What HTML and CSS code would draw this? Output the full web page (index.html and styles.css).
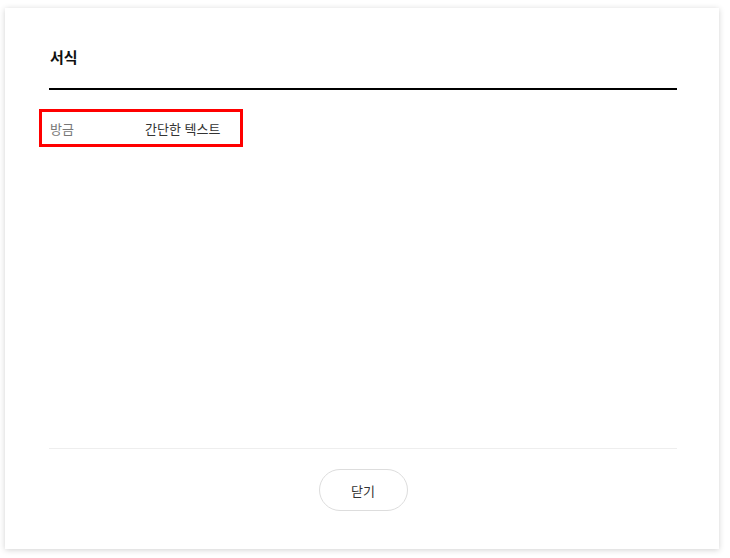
FILE: index.html
```html
<!DOCTYPE html>
<html lang="ko">
<head>
    <meta charset="UTF-8">
    <meta name="viewport" content="width=device-width, initial-scale=1.0">
    <title>서식</title>
    <link rel="stylesheet" href="styles.css">
</head>
<body>
    <div class="modal">
        <div class="modal-body">
            <h2 class="modal-title">서식</h2>
            <div class="format-list">
                <div class="format-row">
                    <span class="format-label">방금</span>
                    <span class="format-value">간단한 텍스트</span>
                </div>
            </div>
        </div>
        <div class="modal-footer">
            <button type="button" class="close-btn">닫기</button>
        </div>
    </div>
</body>
</html>
```

FILE: styles.css
```css
body {
    margin: 0;
    padding: 8px 11px 9px 5px;
    background-color: #fff;
    font-family: "Noto Sans CJK KR", "Noto Sans", sans-serif;
}

.modal {
    height: 541px;
    background-color: #fff;
    box-shadow: 0 1px 6px rgba(0, 0, 0, 0.18);
    padding: 0 42px 0 44px;
    display: flex;
    flex-direction: column;
}

.modal-body {
    flex: 1;
}

.modal-title {
    margin: 0;
    padding-top: 38px;
    padding-left: 1px;
    height: 42px;
    font-size: 15px;
    font-weight: bold;
    color: #111;
    line-height: 22px;
    border-bottom: 2px solid #000;
}

.format-list {
    padding-top: 19px;
    margin-left: -10px;
}

.format-row {
    box-sizing: border-box;
    display: inline-flex;
    align-items: center;
    width: 204px;
    height: 38px;
    border: 3px solid #f00;
    padding-left: 8px;
    font-size: 13px;
}

.format-label {
    width: 95px;
    color: #777;
}

.format-value {
    color: #333;
}

.modal-footer {
    border-top: 1px solid #eee;
    height: 101px;
    display: flex;
    justify-content: center;
    padding-top: 20px;
    box-sizing: border-box;
}

.close-btn {
    width: 89px;
    height: 42px;
    border: 1px solid #ddd;
    border-radius: 21px;
    background-color: #fff;
    font-family: inherit;
    font-size: 13px;
    color: #333;
    cursor: pointer;
}
```
